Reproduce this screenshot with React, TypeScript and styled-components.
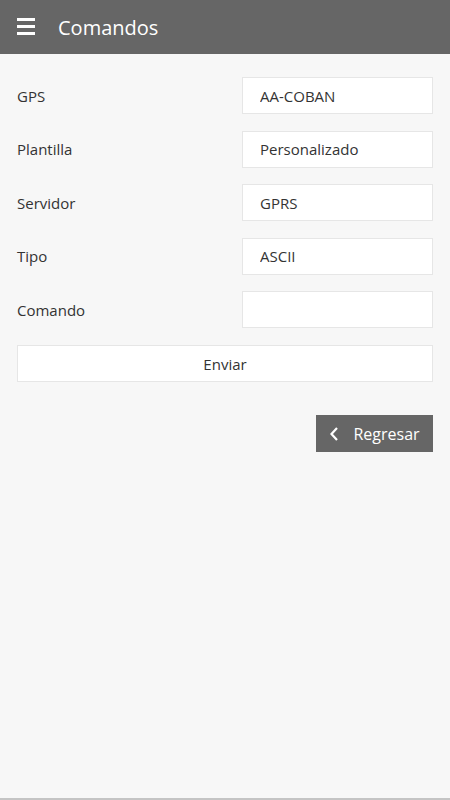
import React from 'react';
import styled, {createGlobalStyle} from "styled-components";

const GlobalStyle = createGlobalStyle`
  html, body {
    margin: 0;
    padding: 0;
    background: #f7f7f7;
  }
  body {
    font-family: "Open Sans", "Noto Sans", sans-serif;
    color: #333;
  }
`

const fields = [
    {label: 'GPS', value: 'AA-COBAN'},
    {label: 'Plantilla', value: 'Personalizado'},
    {label: 'Servidor', value: 'GPRS'},
    {label: 'Tipo', value: 'ASCII'},
    {label: 'Comando', value: ''},
];

export default function App() {
    return (
        <Page>
            <GlobalStyle/>
            <Header>
                <Burger>
                    <span/>
                    <span/>
                    <span/>
                </Burger>
                <Title>Comandos</Title>
            </Header>
            <Content>
                {fields.map(f => (
                    <Row key={f.label}>
                        <Label>{f.label}</Label>
                        <Field readOnly value={f.value}/>
                    </Row>
                ))}
                <SendButton>Enviar</SendButton>
                <Actions>
                    <BackButton>
                        <svg width="10" height="16" viewBox="0 0 10 16">
                            <path d="M8 2 L2.5 8 L8 14" fill="none" stroke="#fff" strokeWidth="2.2"/>
                        </svg>
                        Regresar
                    </BackButton>
                </Actions>
            </Content>
        </Page>
    );
}

const Page = styled.div`
  min-height: 800px;
  box-sizing: border-box;
  background: #f7f7f7;
  border-bottom: 2px solid #c4c4c4;
  display: flex;
  flex-direction: column;
`

const Header = styled.header`
  height: 54px;
  background: #666666;
  display: flex;
  align-items: center;
  padding: 0 17px;
  gap: 23px;
`

const Burger = styled.div`
  width: 18px;
  display: flex;
  flex-direction: column;
  gap: 4px;
  margin-top: -2px;

  span {
    display: block;
    height: 3px;
    background: #fff;
  }
`

const Title = styled.h1`
  margin: 0;
  color: #fff;
  font-size: 20px;
  font-weight: 400;
`

const Content = styled.main`
  padding: 23px 17px 0;
  display: flex;
  flex-direction: column;
`

const Row = styled.div`
  display: flex;
  align-items: center;
  justify-content: space-between;
  height: 37px;
  margin-bottom: 16.5px;
`

const Label = styled.span`
  font-size: 15px;
  color: #333;
`

const Field = styled.input`
  width: 191px;
  height: 37px;
  box-sizing: border-box;
  border: 1px solid #e6e6e6;
  background: #fff;
  padding: 0 17px;
  font-family: inherit;
  font-size: 15px;
  color: #333;
  outline: none;
`

const SendButton = styled.button`
  height: 37px;
  margin-top: 0.5px;
  border: 1px solid #e6e6e6;
  background: #fff;
  font-family: inherit;
  font-size: 15px;
  color: #333;
  cursor: pointer;
`

const Actions = styled.div`
  display: flex;
  justify-content: flex-end;
  margin-top: 33px;
`

const BackButton = styled.button`
  width: 117px;
  height: 37px;
  border: none;
  background: #666666;
  color: #fff;
  font-family: inherit;
  font-size: 16px;
  display: flex;
  align-items: center;
  justify-content: center;
  gap: 14px;
  cursor: pointer;
  padding: 0;
`
